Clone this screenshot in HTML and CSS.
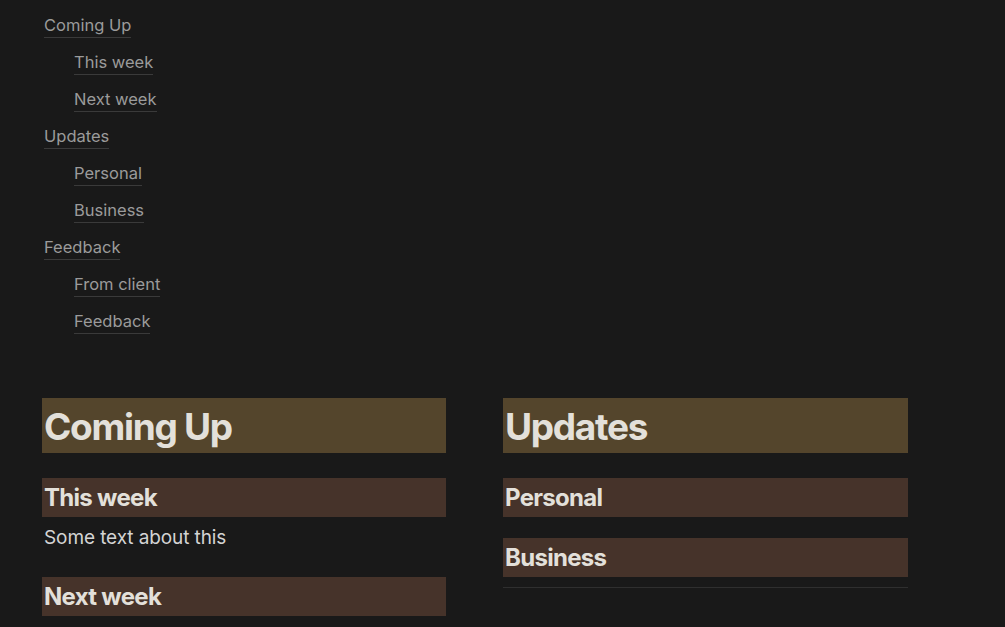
FILE: index.html
```html
<!DOCTYPE html>
<html>
<head>
<meta charset="utf-8">
<link rel="stylesheet" href="styles.css">
</head>
<body>
<div class="page">
  <nav class="toc">
    <div class="toc-item"><a href="#">Coming Up</a></div>
    <div class="toc-item sub"><a href="#">This week</a></div>
    <div class="toc-item sub"><a href="#">Next week</a></div>
    <div class="toc-item"><a href="#">Updates</a></div>
    <div class="toc-item sub"><a href="#">Personal</a></div>
    <div class="toc-item sub"><a href="#">Business</a></div>
    <div class="toc-item"><a href="#">Feedback</a></div>
    <div class="toc-item sub"><a href="#">From client</a></div>
    <div class="toc-item sub"><a href="#">Feedback</a></div>
  </nav>
  <div class="columns">
    <div class="col left">
      <h1 class="h1">Coming Up</h1>
      <h2 class="h2">This week</h2>
      <p class="text">Some text about this</p>
      <h2 class="h2 gap">Next week</h2>
    </div>
    <div class="col right">
      <h1 class="h1">Updates</h1>
      <h2 class="h2">Personal</h2>
      <h2 class="h2 tight">Business</h2>
      <div class="divider"></div>
    </div>
  </div>
</div>
</body>
</html>
```

FILE: styles.css
```css
html, body {
  margin: 0;
  padding: 0;
  background: #191919;
  font-family: Inter, "Liberation Sans", sans-serif;
}
.page {
  padding: 8px 0 0 42px;
}
.toc {
  display: flex;
  flex-direction: column;
}
.toc-item {
  height: 37px;
  display: flex;
  align-items: center;
  padding-left: 2px;
}
.toc-item.sub {
  padding-left: 32px;
}
.toc-item a {
  color: #9b9b9b;
  text-decoration: none;
  font-size: 16.5px;
  line-height: 1.3;
  border-bottom: 1px solid #3a3a3a;
}
.columns {
  display: flex;
  gap: 57px;
  margin-top: 57px;
}
.col {
  display: flex;
  flex-direction: column;
}
.col.left {
  width: 404px;
}
.col.right {
  width: 405px;
}
.h1 {
  margin: 0;
  height: 55px;
  box-sizing: border-box;
  background: #54452c;
  color: #e3e0da;
  font-size: 37px;
  font-weight: 700;
  line-height: 57px;
  padding: 0 2px;
  letter-spacing: -1.3px;
}
.h2 {
  margin: 25px 0 0;
  height: 39px;
  box-sizing: border-box;
  background: #46332a;
  color: #e3e0da;
  font-size: 24px;
  font-weight: 700;
  line-height: 40px;
  padding: 0 2px;
  letter-spacing: -0.7px;
}
.h2.gap {
  margin-top: 22px;
}
.h2.tight {
  margin-top: 21px;
}
.text {
  margin: 0;
  box-sizing: border-box;
  padding: 6px 2px 0;
  color: #d4d4d4;
  font-size: 19px;
  line-height: 30px;
  height: 38px;
  letter-spacing: -0.1px;
}
.divider {
  margin-top: 10px;
  height: 1px;
  background: #2f2f2f;
}
```
